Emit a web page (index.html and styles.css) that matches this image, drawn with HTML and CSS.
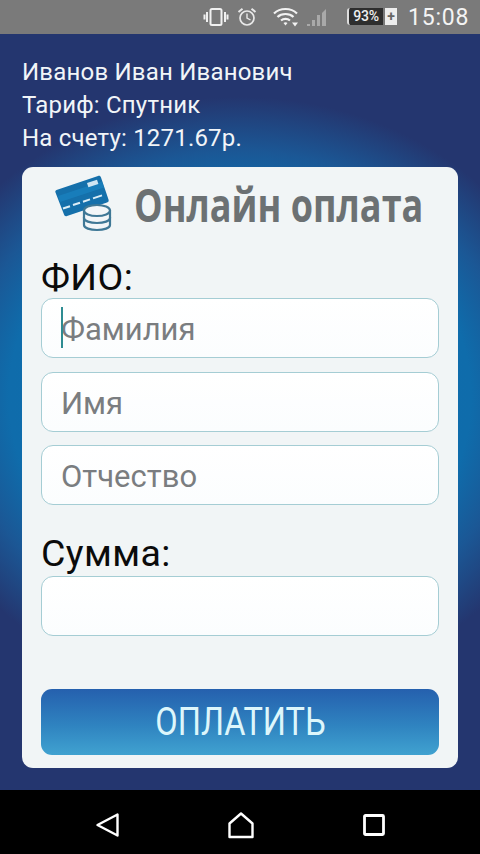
FILE: index.html
```html
<!DOCTYPE html>
<html lang="ru">
<head>
<meta charset="utf-8">
<title>Онлайн оплата</title>
<link rel="stylesheet" href="styles.css">
</head>
<body>
<div class="phone">
  <header class="status">
    <svg class="ic-vib" viewBox="0 0 26 20" width="26" height="20"><rect x="7.500" y="2" width="11" height="16" rx="1.500" fill="none" stroke="#f0f0f0" stroke-width="2"/><path d="M4 5v10M1.500 7.500v5M22 5v10M24.500 7.500v5" stroke="#f0f0f0" stroke-width="2" fill="none"/></svg>
    <svg class="ic-alarm" viewBox="0 0 20 20" width="20" height="20"><circle cx="10" cy="11" r="7" fill="none" stroke="#e8e8e8" stroke-width="1.700"/><path d="M10 6.500V11l3.500 2" fill="none" stroke="#e8e8e8" stroke-width="1.400"/><path d="M1.500 5 5.500 1.800M18.500 5l-4-3.200" stroke="#e8e8e8" stroke-width="2"/></svg>
    <svg class="ic-wifi" viewBox="0 0 26 20" width="26" height="20"><path d="M1 6.500C7 .5 18 .5 24 6.500M4.500 10c4-4 12-4 16 0M8 13.500c2.500-2.200 6.500-2.200 9 0" fill="none" stroke="#f2f2f2" stroke-width="2.200"/><path d="M10.500 16c1-1 3-1 4 0l-2 2.500z" fill="#f2f2f2"/><path d="M19 15.500h6l-3 4z" fill="#f2f2f2"/></svg>
    <svg class="ic-signal" viewBox="0 0 22 20" width="22" height="20"><path d="M1 19h3v-2H1zM6 19h3v-6H6zM11 19h3V8h-3zM16 19h4V2l-4 4z" fill="#a9a9a9"/></svg>
    <div class="battery"><span class="batt-level">93%</span><span class="batt-plus">+</span></div>
    <span class="clock">15:08</span>
  </header>
  <main class="screen">
    <section class="account">
      <p>Иванов Иван Иванович</p>
      <p>Тариф: Спутник</p>
      <p>На счету: 1271.67р.</p>
    </section>
    <section class="card">
      <div class="brand">
        <svg class="logo" viewBox="0 0 60 58" width="60" height="58">
          <path d="M1.500 15 43 1c1.500-.5 2.500 0 3 1.500l7.500 22c.5 1.500 0 2.500-1.500 3L12 41c-1.500.5-2.500 0-3-1.500L.5 17.500c-.5-1.300 0-2 1-2.500z" fill="#1570ab"/>
          <path d="M3 21 47 6.500l2 6L5 27z" fill="#1c88c6" opacity=".55"/>
          <path d="m32 8 10-3.300 1.400 4.200-10 3.300z" fill="#cfe5f2"/>
          <path d="m8 33.500 7-2.300M18 30l7-2.300M28 26.700l7-2.300M38 23.400l9-3" stroke="#dcedf6" stroke-width="2"/>
          <g fill="#f2f6f8" stroke="#3f7896" stroke-width="2.200">
            <path d="M29 43v7c0 3 6 5 13 5s13-2 13-5v-7z"/>
            <path d="M29 36v7c0 3 6 5 13 5s13-2 13-5v-7z"/>
            <ellipse cx="42" cy="35.500" rx="13" ry="5.500"/>
          </g>
        </svg>
        <h1>Онлайн оплата</h1>
      </div>
      <label class="label">ФИО:</label>
      <div class="field focused"><i class="caret"></i>Фамилия</div>
      <div class="field">Имя</div>
      <div class="field">Отчество</div>
      <label class="label sum">Сумма:</label>
      <div class="field"></div>
      <button class="pay"><span class="pay-text">ОПЛАТИТЬ</span></button>
    </section>
  </main>
  <nav class="navbar">
    <svg viewBox="0 0 26 28" width="26" height="28"><path d="M22.500 3.500v21L2.500 14z" fill="none" stroke="#fff" stroke-width="2.400" stroke-linejoin="round"/></svg>
    <svg viewBox="0 0 28 28" width="28" height="28"><path d="M1.500 26V12.500L13 2.500l11.500 10V26z" fill="none" stroke="#fff" stroke-width="2.400" stroke-linejoin="round"/></svg>
    <svg viewBox="0 0 24 24" width="24" height="24"><rect x="2.500" y="2.500" width="19" height="19" rx="1" fill="none" stroke="#fff" stroke-width="2.800"/></svg>
  </nav>
</div>
</body>
</html>
```

FILE: styles.css
```css
* { box-sizing: border-box; }
html, body { margin: 0; padding: 0; }
body { font-family: "Roboto", "Liberation Sans", sans-serif; background: #000; }
.phone { width: 480px; height: 854px; display: flex; flex-direction: column; overflow: hidden; }

.status {
  height: 34px; flex: none; background: #7a7a7a; color: #f2f2f2;
  display: flex; align-items: center; padding: 0 12px 0 203px;
}
.ic-vib { margin-right: 8px; margin-top: -1px; flex: none; }
.ic-alarm { margin-right: 16px; margin-top: -1px; flex: none; }
.ic-wifi { margin-right: 7px; flex: none; }
.ic-signal { margin-right: 19px; margin-top: -1px; flex: none; }
.battery {
  display: flex; height: 17px; width: 50px; margin-right: 11px; margin-top: -1px; flex: none;
  font-size: 14px; font-weight: 500; line-height: 17px;
}
.batt-level { width: 36px; margin-right: 2px; background: #2e2e2e; color: #eee; text-align: center; border: 1px solid #ddd; border-width: 0 0 0 2px; border-radius: 3px 0 0 3px; letter-spacing: -.3px; }
.batt-plus { width: 12px; background: #ededed; color: #666; text-align: center; font-weight: 700; }
.clock { font-size: 23px; letter-spacing: .8px; color: #f4f4f4; white-space: nowrap; }

.screen {
  height: 756px; flex: none; padding: 22px 22px 22px;
  background:
    radial-gradient(ellipse 340px 300px at 50% 48%, #0c6fb0 0%, #0f6cab 68%, #1b5795 82%, rgba(36,54,111,0) 100%),
    #24366f;
  display: flex; flex-direction: column;
}
.account { color: #f1f5f8; font-size: 24px; letter-spacing: .2px; margin-bottom: 12px; }
.account p { margin: 0; height: 33px; line-height: 33px; white-space: nowrap; }

.card {
  flex: 1; background: #f1f5f6; border-radius: 11px; padding: 0 19px 13px;
  display: flex; flex-direction: column;
}
.brand { display: flex; align-items: center; height: 74px; padding-left: 14px; }
.logo { margin-right: 19px; flex: none; }
.brand h1 {
  margin: 0; color: #6c7173; white-space: nowrap;
  font-family: "Open Sans", "Roboto", sans-serif; font-size: 47px; font-weight: 700;
  transform: scaleX(.767); transform-origin: left center;
}
.label { display: block; font-size: 37.500px; letter-spacing: .4px; line-height: 36px; color: #0b0b0b; height: 36px; margin-top: 18px; margin-bottom: 3px; }
.label.sum { margin-top: 16.500px; margin-bottom: 5px; }
.field {
  position: relative; height: 60px; flex: none; margin-bottom: 13.500px;
  background: linear-gradient(#ffffff, #fbfdfe);
  border: 1.500px solid #a5cdd4; border-radius: 12px;
  color: #7a7d80; font-size: 31px; line-height: 62px; padding-left: 19px;
}
.caret { position: absolute; left: 19px; top: 8px; width: 2px; height: 41px; background: #2e8c92; }
.pay {
  margin-top: auto; height: 66px; flex: none; width: 100%;
  border: 0; border-radius: 11px; color: #ddf6fb;
  background: linear-gradient(#2560ae, #2f83c0 55%, #40a2d0);
  font-family: "Roboto", sans-serif; font-size: 38px;
  padding: 0;
}
.pay-text { display: inline-block; transform: scaleX(.856); }
.navbar {
  height: 64px; flex: none; background: #000;
  display: flex; align-items: center; justify-content: space-between; padding: 6px 94px 0 95px;
}
```
